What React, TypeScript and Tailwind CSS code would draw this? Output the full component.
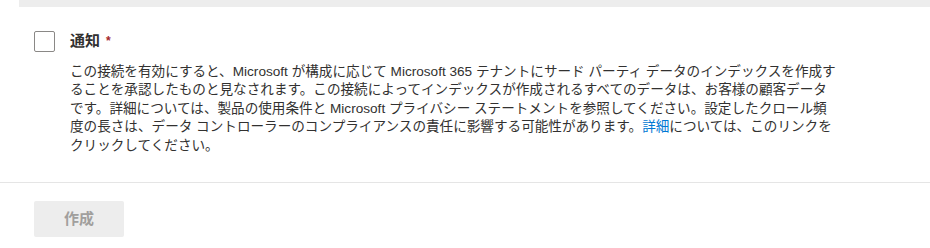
import { useState } from "react"

const font = {
  fontFamily: '"Liberation Sans", "Noto Sans CJK JP", sans-serif',
}

export default function App() {
  const [checked, setChecked] = useState(false)

  return (
    <div className="w-[930px] h-[248px] bg-white text-[#323130] overflow-hidden" style={font}>
      {/* bottom edge of the previous field */}
      <div className="ml-[19px] h-[7px] bg-[#ededed]" />

      {/* consent checkbox */}
      <div className="flex gap-[15px] pl-[34px] pt-[23px]">
        <button
          onClick={() => setChecked(!checked)}
          className="mt-px w-[21px] h-[21px] shrink-0 rounded-[2px] border border-[#8a8886] bg-white"
          aria-label="通知"
        />
        <div className="w-[767px]">
          <div className="h-[22px] flex items-center text-[15px] font-bold leading-[22px]">
            通知 <span className="ml-[6px] text-[12px] text-[#a4262c]">*</span>
          </div>
          <p className="mt-[11px] text-[13.6px] leading-[18.4px]">
            この接続を有効にすると、Microsoft が構成に応じて Microsoft 365 テナントにサード パーティ データのインデックスを作成することを承認したものと見なされます。この接続によってインデックスが作成されるすべてのデータは、お客様の顧客データです。詳細については、製品の使用条件と Microsoft プライバシー ステートメントを参照してください。設定したクロール頻度の長さは、データ コントローラーのコンプライアンスの責任に影響する可能性があります。
            <a className="text-[#0078d4]">詳細</a>
            については、このリンクをクリックしてください。
          </p>
        </div>
      </div>

      <div className="mt-[27px] h-px bg-[#e5e5e5]" />

      <div className="pl-[34px] pt-[18px]">
        <button
          disabled
          className="w-[90px] h-[36px] rounded-[2px] bg-[#ededed] text-[15px] font-bold text-[#a19f9d]"
        >
          作成
        </button>
      </div>
    </div>
  )
}
